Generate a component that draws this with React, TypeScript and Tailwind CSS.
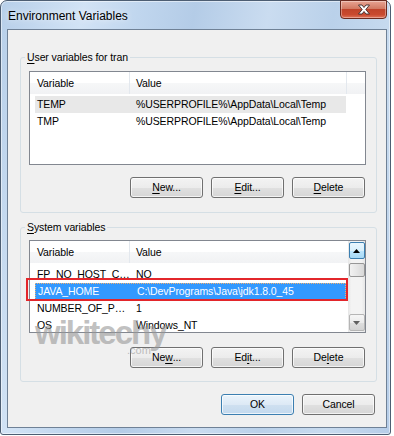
import React from "react";

type BtnProps = { children: React.ReactNode; primary?: boolean };

const Btn = ({ children, primary = false }: BtnProps) => (
  <div
    className={
      primary
        ? "w-[73px] h-[21px] rounded-[3px] border border-[#3c7fb1] bg-[linear-gradient(180deg,#eaf4fc_0%,#dde9f5_50%,#cfe0f0_51%,#c3d9ee_100%)] shadow-[inset_0_0_0_1px_rgba(255,255,255,0.7)] flex items-center justify-center text-black"
        : "w-[73px] h-[21px] rounded-[3px] border border-[#707070] bg-[linear-gradient(180deg,#f3f3f3_0%,#ececec_50%,#e0e0e0_51%,#d6d6d6_100%)] shadow-[inset_0_0_0_1px_rgba(255,255,255,0.7)] flex items-center justify-center text-black"
    }
  >
    {children}
  </div>
);

const U = ({ children }: { children: React.ReactNode }) => (
  <span className="underline underline-offset-[2px] decoration-1">{children}</span>
);

type Row = { name: string; value: string; state?: "hover" | "selected" };

const RowView = ({ row }: { row: Row }) => (
  <div
    className={
      row.state === "selected"
        ? "ml-[5px] w-[311px] h-[17px] shrink-0 flex items-center bg-[#3399ff] text-white border border-dotted border-[#f0b070] overflow-hidden"
        : row.state === "hover"
        ? "ml-[5px] w-[311px] h-[17px] shrink-0 flex items-center bg-[#e8e8e8] text-black overflow-hidden"
        : "ml-[5px] w-[311px] h-[17px] shrink-0 flex items-center text-black overflow-hidden"
    }
  >
    <div className="w-[101px] shrink-0 pl-[2px] whitespace-nowrap">{row.name}</div>
    <div className="whitespace-nowrap">{row.value}</div>
  </div>
);

const Scrollbar = () => (
  <div className="w-[17px] h-full shrink-0 flex flex-col items-center bg-[linear-gradient(90deg,#e6e6e6_0%,#f3f3f3_20%,#f3f3f3_80%,#e6e6e6_100%)]">
    <div className="mt-[1px] w-[16px] h-[17px] rounded-[2px] border border-[#3c7fb1] bg-[linear-gradient(180deg,#eaf6fd_0%,#d9f0fc_50%,#bee6fd_51%,#a7d9f5_100%)] flex items-center justify-center">
      <svg width="7" height="4" viewBox="0 0 7 4">
        <path d="M0 4 L3.5 0 L7 4 Z" fill="#000" />
      </svg>
    </div>
    <div className="mt-[4px] w-[16px] h-[14px] rounded-[2px] border border-[#979797] bg-[linear-gradient(90deg,#f2f2f2_0%,#e6e6e6_50%,#d8d8d8_100%)]" />
    <div className="flex-1" />
    <div className="mb-[1px] w-[16px] h-[17px] rounded-[2px] border border-[#b5b5b5] bg-[linear-gradient(180deg,#f6f6f6_0%,#ebebeb_50%,#dedede_51%,#d3d3d3_100%)] flex items-center justify-center">
      <svg width="7" height="4" viewBox="0 0 7 4">
        <path d="M0 0 L3.5 4 L7 0 Z" fill="#606060" />
      </svg>
    </div>
  </div>
);

const userRows: Row[] = [
  { name: "TEMP", value: "%USERPROFILE%\\AppData\\Local\\Temp", state: "hover" },
  { name: "TMP", value: "%USERPROFILE%\\AppData\\Local\\Temp" },
];

const sysRows: Row[] = [
  { name: "FP_NO_HOST_C…", value: "NO" },
  { name: "JAVA_HOME", value: "C:\\DevPrograms\\Java\\jdk1.8.0_45", state: "selected" },
  { name: "NUMBER_OF_P…", value: "1" },
  { name: "OS", value: "Windows_NT" },
];

const headerBg =
  "h-[22px] flex shrink-0 bg-[linear-gradient(180deg,#ffffff_0%,#ffffff_50%,#f6f7f8_51%,#f1f2f4_100%)]";

export default function App() {
  return (
    <div className="w-[394px] h-[436px] bg-white overflow-hidden font-['Liberation_Sans',Arial,sans-serif] text-[10.5px] tracking-[-0.1px] leading-none text-black">
      <div className="w-[391px] h-[435px] rounded-t-[7px] rounded-b-[3px] border border-[#4d5e73] bg-[linear-gradient(100deg,#b7cfe9_0%,#d2e3f5_18%,#c0d6ee_30%,#b4cce7_42%,#cadcf0_58%,#bad1ea_72%,#c8dbef_86%,#b6cde8_100%)] flex flex-col shadow-[inset_0_0_0_1px_rgba(255,255,255,0.5)]">
        {/* Title bar */}
        <div className="h-[28px] flex items-start shrink-0">
          <div className="pl-[7px] pt-[9px] text-[12px] tracking-normal text-black [text-shadow:0_0_6px_rgba(255,255,255,0.9)]">
            Environment Variables
          </div>
          <div className="ml-auto mr-[3px] mt-[-1px] w-[47px] h-[19px] rounded-b-[4px] border border-[#6b2a1f] bg-[linear-gradient(180deg,#e8a493_0%,#d27a63_45%,#c0432a_50%,#c94a2f_80%,#e0745a_100%)] shadow-[inset_0_0_0_1px_rgba(255,255,255,0.35)] flex items-center justify-center">
            <svg width="14" height="11" viewBox="0 0 14 11">
              <path
                d="M1.5 1 L5 1 L7 3.5 L9 1 L12.5 1 L8.8 5.5 L12.5 10 L9 10 L7 7.5 L5 10 L1.5 10 L5.2 5.5 Z"
                fill="#ffffff"
                stroke="#3b2a2a"
                strokeWidth="0.9"
                strokeLinejoin="round"
              />
            </svg>
          </div>
        </div>

        {/* Client area */}
        <div className="ml-[6px] w-[380px] h-[399px] border border-[#6f8196] bg-[#f0f0f0] flex flex-col relative">
          {/* User variables */}
          <fieldset className="ml-[12px] mt-[19px] w-[357px] border border-[#d5dfe5] rounded-[3px] pl-[8px] pr-[10px] pb-[14px]">
            <legend className="ml-[-4px] px-[2px] h-[16px] leading-[16px]">
              <U>U</U>ser variables for tran
            </legend>
            <div className="mt-[6px] w-[337px] h-[94px] border border-[#828790] bg-white flex flex-col">
              <div className={headerBg}>
                <div className="w-[100px] pl-[7px] flex items-center border-r border-[#e3e8ee]">Variable</div>
                <div className="w-[217px] pl-[6px] flex items-center border-r border-[#e3e8ee]">Value</div>
                <div className="flex-1" />
              </div>
              <div className="pt-[2px] flex flex-col">
                {userRows.map((r) => (
                  <RowView key={r.name} row={r} />
                ))}
              </div>
            </div>
            <div className="mt-[12px] flex justify-end gap-[8px] pr-[1px]">
              <Btn>
                <U>N</U>ew...
              </Btn>
              <Btn>
                <U>E</U>dit...
              </Btn>
              <Btn>
                <U>D</U>elete
              </Btn>
            </div>
          </fieldset>

          {/* System variables */}
          <fieldset className="ml-[12px] mt-[6px] w-[357px] border border-[#d5dfe5] rounded-[3px] pl-[8px] pr-[10px] pb-[13px]">
            <legend className="ml-[-4px] px-[2px] h-[16px] leading-[16px]">
              <U>S</U>ystem variables
            </legend>
            <div className="relative mt-[5px] w-[337px] h-[93px] border border-[#828790] bg-white flex">
              <div className="flex-1 flex flex-col overflow-hidden">
                <div className={headerBg}>
                  <div className="w-[100px] pl-[7px] flex items-center border-r border-[#e3e8ee]">Variable</div>
                  <div className="w-[217px] pl-[6px] flex items-center">Value</div>
                </div>
                <div className="pt-[3px] flex flex-col">
                  {sysRows.map((r) => (
                    <RowView key={r.name} row={r} />
                  ))}
                </div>
              </div>
              <Scrollbar />
              {/* red annotation box */}
              <div className="absolute left-[-4px] top-[37px] w-[322px] h-[23px] border-2 border-[#e3262b] pointer-events-none" />
            </div>
            <div className="mt-[14px] flex justify-end gap-[8px] pr-[1px]">
              <Btn>
                Ne<U>w</U>...
              </Btn>
              <Btn>
                Ed<U>i</U>t...
              </Btn>
              <Btn>
                De<U>l</U>ete
              </Btn>
            </div>
          </fieldset>

          {/* watermark */}
          <div className="absolute left-[27px] top-[286px] pointer-events-none select-none opacity-60">
            <div className="text-[33px] font-bold tracking-[-2px] text-[#989898] leading-none">wikitechy</div>
            <div className="ml-[92px] -mt-[4px] text-[11px] tracking-normal text-[#989898] leading-none">.com</div>
          </div>

          {/* OK / Cancel */}
          <div className="mt-[12px] flex justify-end gap-[8px] pr-[11px]">
            <Btn primary>OK</Btn>
            <Btn>Cancel</Btn>
          </div>
        </div>
      </div>
    </div>
  );
}
